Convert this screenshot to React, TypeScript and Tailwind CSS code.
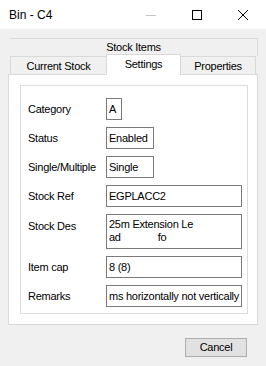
export default function App() {
  const rows: { label: string; value: React.ReactNode; w: string; h?: string; top?: boolean }[] = [
    { label: "Category", value: "A", w: "w-[16px]" },
    { label: "Status", value: "Enabled", w: "w-[48px]" },
    { label: "Single/Multiple", value: "Single", w: "w-[48px]" },
    { label: "Stock Ref", value: "EGPLACC2", w: "w-[136px]" },
    {
      label: "Stock Des",
      value: (
        <div className="leading-[13px] pt-[3px]">
          <div>25m Extension Le</div>
          <div>
            ad<span className="ml-[37px]">fo</span>
          </div>
        </div>
      ),
      w: "w-[136px]",
      h: "h-[35px]",
      top: true,
    },
    { label: "Item cap", value: "8 (8)", w: "w-[136px]" },
    { label: "Remarks", value: "ms horizontally not vertically", w: "w-[136px]" },
  ];

  return (
    <div
      className="w-[266px] h-[366px] bg-[#f0f0f0] text-black text-[11px] tracking-[-0.25px] overflow-hidden"
      style={{ fontFamily: '"Liberation Sans", Arial, sans-serif' }}
    >
      {/* Title bar */}
      <div className="h-[29px] bg-white flex items-center">
        <span className="pl-[9px] text-[12px] tracking-normal">Bin - C4</span>
        <div className="ml-auto flex h-full">
          <div className="w-[46px] flex items-center justify-center">
            <svg width="10" height="10" viewBox="0 0 10 10">
              <path d="M0 5.5h10" stroke="#c4c4c4" strokeWidth="1" />
            </svg>
          </div>
          <div className="w-[46px] flex items-center justify-center">
            <svg width="10" height="10" viewBox="0 0 10 10">
              <rect x="0.5" y="0.5" width="9" height="9" fill="none" stroke="#000" strokeWidth="1" />
            </svg>
          </div>
          <div className="w-[46px] flex items-center justify-center">
            <svg width="10" height="10" viewBox="0 0 10 10">
              <path d="M0 0L10 10M10 0L0 10" stroke="#000" strokeWidth="1" />
            </svg>
          </div>
        </div>
      </div>

      {/* Outer tab */}
      <div className="mt-[9px] ml-[10px] w-[248px] h-[18px] border-t border-r border-[#d9d9d9] flex items-center justify-center">
        Stock Items
      </div>

      {/* Inner tabs */}
      <div className="ml-[10px] h-[18px] flex items-stretch">
        <div className="w-[96px] border-t border-l border-[#d9d9d9] flex items-center justify-center pt-px">
          Current Stock
        </div>
        <div className="relative z-10 w-[75px] -mt-[2px] -mb-[1px] bg-white border-t border-l border-r border-[#d9d9d9] flex items-center justify-center pb-[2px]">
          Settings
        </div>
        <div className="w-[75px] border-t border-r border-[#d9d9d9] flex items-center justify-center pt-px">
          Properties
        </div>
      </div>

      {/* Tab page */}
      <div className="ml-[8px] w-[250px] h-[251px] bg-white border border-[#d9d9d9] pt-[10px] pl-[11px]">
        <div className="w-[228px] h-[229px] border border-[#dcdcdc] pt-[12px] pl-[7px] flex flex-col gap-[7px]">
          {rows.map((r) => (
            <div key={r.label} className={`flex ${r.top ? "items-start" : "items-center"}`}>
              <div className={`w-[78px] ${r.top ? "pt-[4px]" : ""}`}>{r.label}</div>
              <div
                className={`${r.w} ${r.h ?? "h-[22px]"} border border-[#7a7a7a] pl-[2px] overflow-hidden whitespace-nowrap ${
                  r.top ? "" : "flex items-center"
                }`}
              >
                {r.value}
              </div>
            </div>
          ))}
        </div>
      </div>

      {/* Buttons */}
      <div className="mt-[13px] ml-[185px] w-[62px] h-[19px] bg-[#e1e1e1] border border-[#adadad] flex items-center justify-center">
        Cancel
      </div>
    </div>
  );
}
